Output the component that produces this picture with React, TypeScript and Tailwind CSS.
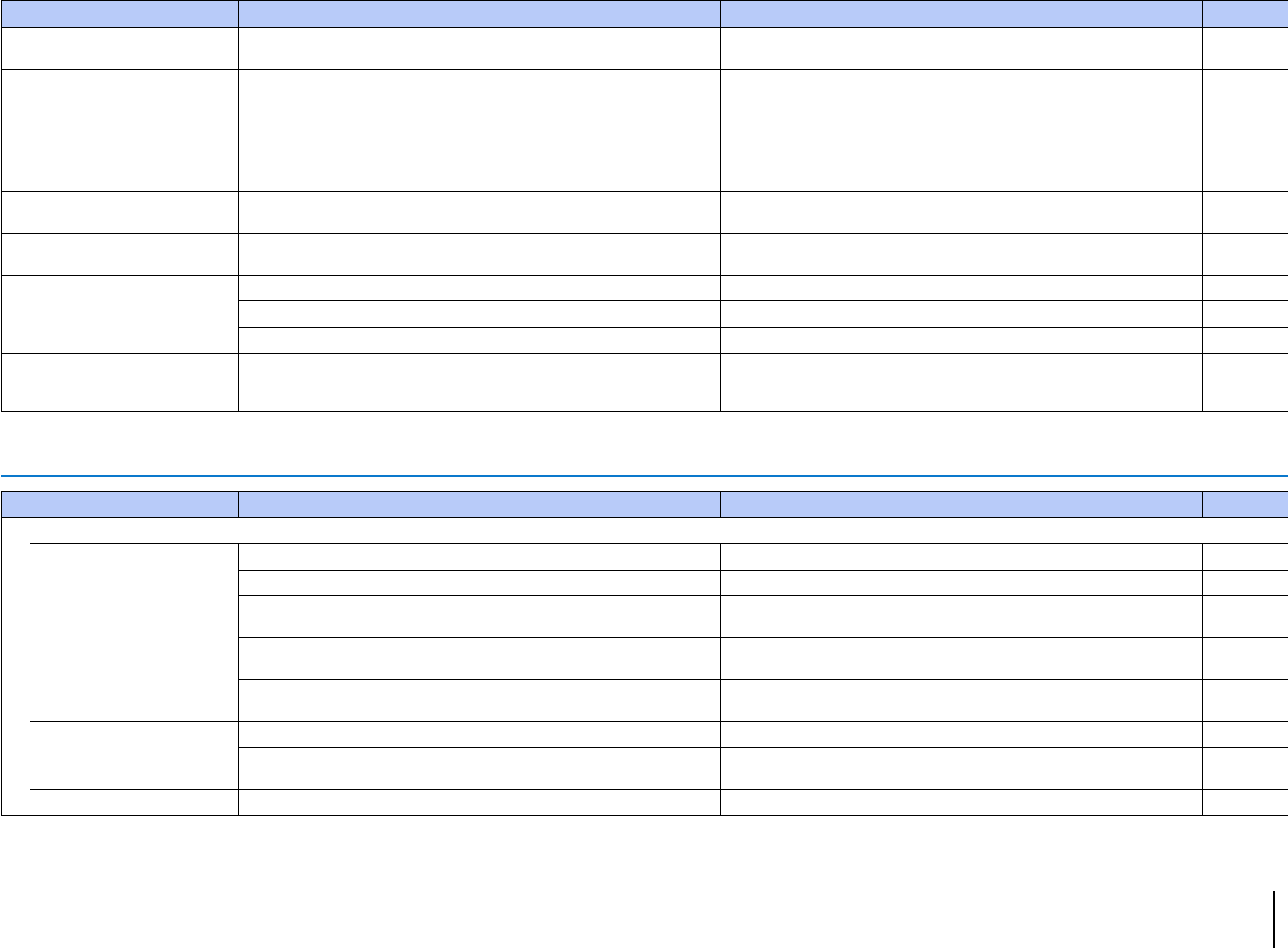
import React from 'react';

const cell = 'border border-black p-0';
const head = 'border border-black p-0 bg-[#b8cbf9]';
// cells right of the indent strip carry no left rule
const inner = 'border border-black border-l-0 p-0';

const App: React.FC = () => {
  return (
    <div className="w-[1288px] h-[948px] bg-white relative font-['Liberation_Sans',sans-serif] text-[13px] text-black">
      <table className="table-fixed border-collapse w-[1287px] ml-[1px]">
        <colgroup>
          <col className="w-[237px]" />
          <col className="w-[482px]" />
          <col className="w-[482px]" />
          <col className="w-[86px]" />
        </colgroup>
        <tbody>
          <tr className="h-[27px]">
            <td className={head}></td>
            <td className={head}></td>
            <td className={head}></td>
            <td className={head}></td>
          </tr>
          <tr className="h-[42px]">
            <td className={cell}></td>
            <td className={cell}></td>
            <td className={cell}></td>
            <td className={cell}></td>
          </tr>
          <tr className="h-[122px]">
            <td className={cell}></td>
            <td className={cell}></td>
            <td className={cell}></td>
            <td className={cell}></td>
          </tr>
          <tr className="h-[42px]">
            <td className={cell}></td>
            <td className={cell}></td>
            <td className={cell}></td>
            <td className={cell}></td>
          </tr>
          <tr className="h-[42px]">
            <td className={cell}></td>
            <td className={cell}></td>
            <td className={cell}></td>
            <td className={cell}></td>
          </tr>
          <tr className="h-[25px]">
            <td className={cell} rowSpan={3}></td>
            <td className={cell}></td>
            <td className={cell}></td>
            <td className={cell}></td>
          </tr>
          <tr className="h-[27px]">
            <td className={cell}></td>
            <td className={cell}></td>
            <td className={cell}></td>
          </tr>
          <tr className="h-[26px]">
            <td className={cell}></td>
            <td className={cell}></td>
            <td className={cell}></td>
          </tr>
          <tr className="h-[58px]">
            <td className={cell}></td>
            <td className={cell}></td>
            <td className={cell}></td>
            <td className={cell}></td>
          </tr>
        </tbody>
      </table>

      <div className="mt-[63px] ml-[1px] w-[1287px] h-[2px] bg-[#0a78cc]"></div>

      <table className="table-fixed border-collapse w-[1287px] ml-[1px] mt-[14px]">
        <colgroup>
          <col className="w-[28px]" />
          <col className="w-[209px]" />
          <col className="w-[482px]" />
          <col className="w-[482px]" />
          <col className="w-[86px]" />
        </colgroup>
        <tbody>
          <tr className="h-[26px]">
            <td className={head} colSpan={2}></td>
            <td className={head}></td>
            <td className={head}></td>
            <td className={head}></td>
          </tr>
          <tr className="h-[26px]">
            <td className="border border-black border-b-0 p-0" colSpan={5}></td>
          </tr>
          <tr className="h-[27px]">
            <td className="border border-black border-t-0 border-r-0 p-0" rowSpan={8}></td>
            <td className={inner} rowSpan={5}></td>
            <td className={cell}></td>
            <td className={cell}></td>
            <td className={cell}></td>
          </tr>
          <tr className="h-[25px]">
            <td className={cell}></td>
            <td className={cell}></td>
            <td className={cell}></td>
          </tr>
          <tr className="h-[42px]">
            <td className={cell}></td>
            <td className={cell}></td>
            <td className={cell}></td>
          </tr>
          <tr className="h-[42px]">
            <td className={cell}></td>
            <td className={cell}></td>
            <td className={cell}></td>
          </tr>
          <tr className="h-[42px]">
            <td className={cell}></td>
            <td className={cell}></td>
            <td className={cell}></td>
          </tr>
          <tr className="h-[26px]">
            <td className={inner} rowSpan={2}></td>
            <td className={cell}></td>
            <td className={cell}></td>
            <td className={cell}></td>
          </tr>
          <tr className="h-[42px]">
            <td className={cell}></td>
            <td className={cell}></td>
            <td className={cell}></td>
          </tr>
          <tr className="h-[26px]">
            <td className={inner}></td>
            <td className={cell}></td>
            <td className={cell}></td>
            <td className={cell}></td>
          </tr>
        </tbody>
      </table>

      {/* page edge marker */}
      <div className="absolute left-[1273px] top-[891px] w-[2px] h-[57px] bg-black"></div>
    </div>
  );
};

export default App;
